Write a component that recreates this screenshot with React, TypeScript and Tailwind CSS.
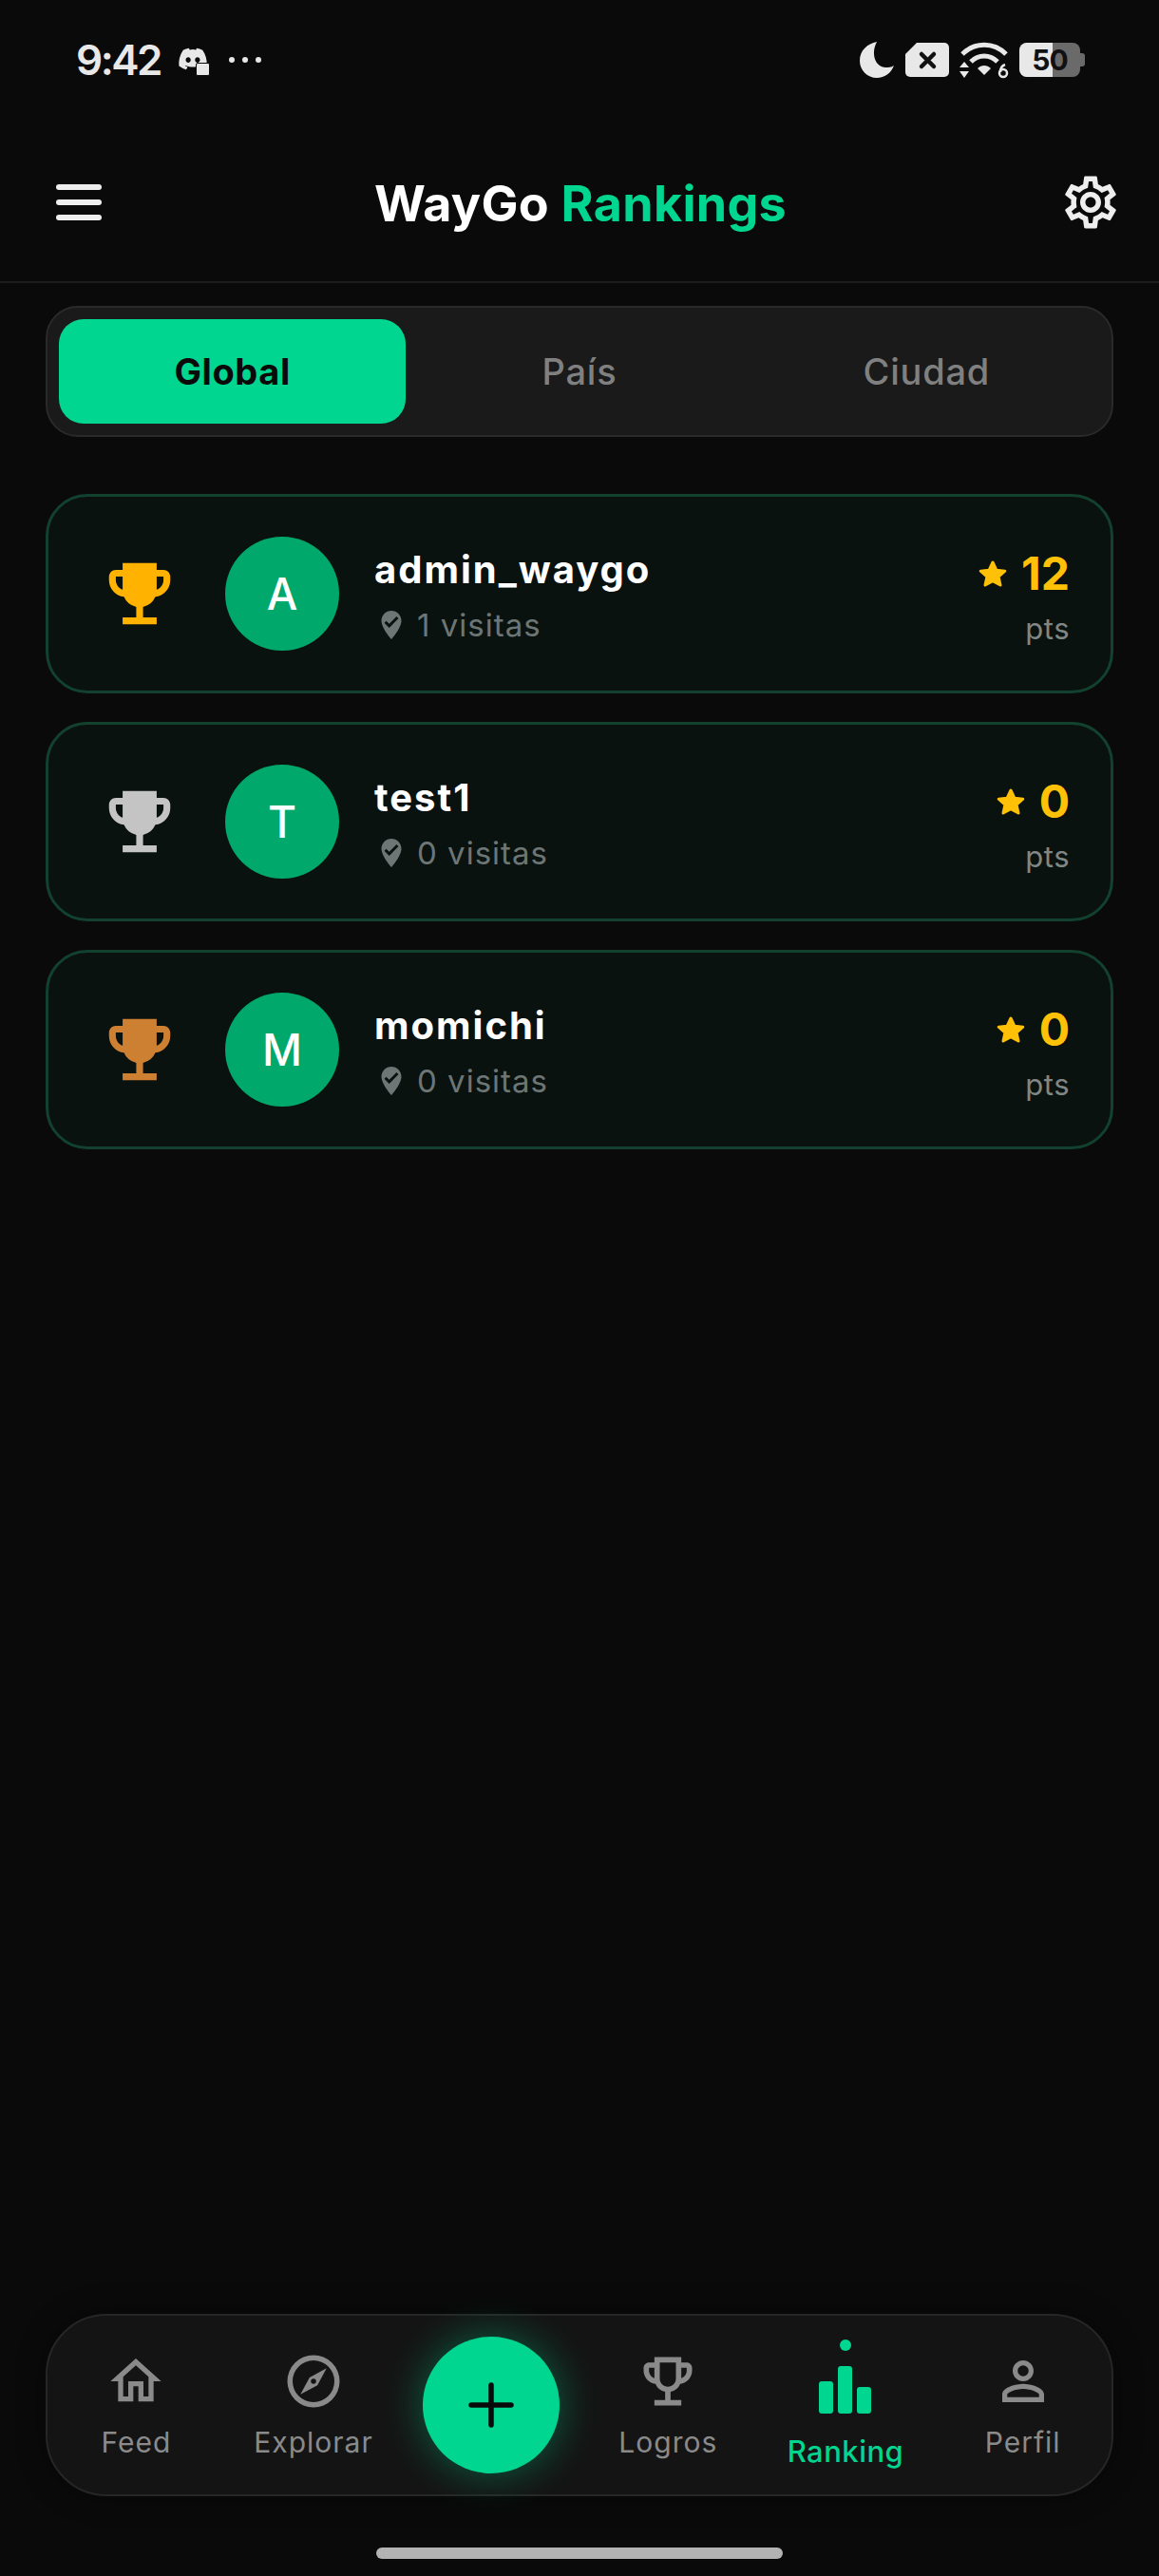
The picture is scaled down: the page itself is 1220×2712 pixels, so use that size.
import {
  MdEmojiEvents,
  MdOutlineEmojiEvents,
  MdPersonOutline,
  MdWhereToVote,
  MdOutlineSettings,
} from 'react-icons/md';
import { FaDiscord } from 'react-icons/fa';
import type { ReactNode } from 'react';

const font = { fontFamily: 'Inter, "Noto Sans", sans-serif' };

const players = [
  { name: 'admin_waygo', letter: 'A', visits: 1, pts: 12, medal: 'text-[#ffb300]' },
  { name: 'test1', letter: 'T', visits: 0, pts: 0, medal: 'text-[#c4c4c4]' },
  { name: 'momichi', letter: 'M', visits: 0, pts: 0, medal: 'text-[#cd7f32]' },
];

function HomeIcon() {
  return (
    <svg viewBox="0 0 24 24" className="w-[64px] h-[64px] fill-[#8a8a8a]">
      <path d="M12 5.69L17 10.19V18H15V12H9V18H7V10.19L12 5.69M12 3L2 12H5V20H11V14H13V20H19V12H22L12 3Z" />
    </svg>
  );
}

function CompassIcon() {
  return (
    <svg viewBox="0 0 24 24" className="w-[66px] h-[66px] fill-[#8a8a8a]">
      <path d="M7,17L10.5,10.5L17,7L13.5,13.5L7,17M12,11A1,1 0 0,0 11,12A1,1 0 0,0 12,13A1,1 0 0,0 13,12A1,1 0 0,0 12,11M12,2A10,10 0 0,1 22,12A10,10 0 0,1 12,22A10,10 0 0,1 2,12A10,10 0 0,1 12,2M12,4A8,8 0 0,0 4,12A8,8 0 0,0 12,20A8,8 0 0,0 20,12A8,8 0 0,0 12,4Z" />
    </svg>
  );
}

function BarsIcon() {
  return (
    <svg viewBox="0 0 55 50" className="w-[55px] h-[50px] fill-[#00d68f]">
      <rect x="0" y="16" width="15" height="34" rx="3" />
      <rect x="20" y="0" width="15" height="50" rx="3" />
      <rect x="40" y="22" width="15" height="28" rx="3" />
    </svg>
  );
}

function StarIcon() {
  return (
    <svg viewBox="0 0 32 30" className="w-[32px] h-[30px] fill-[#ffc107] stroke-[#ffc107]">
      <path
        d="M16 3l3.8 8.2 9 1-6.7 6 1.9 8.8L16 22.6 8 27l1.9-8.8-6.7-6 9-1z"
        strokeWidth="3"
        strokeLinejoin="round"
      />
    </svg>
  );
}

function StatusIcons() {
  return (
    <div className="mt-[2px] flex items-center gap-[11px]">
      {/* luna */}
      <svg viewBox="0 0 38 40" className="w-[38px] h-[40px] fill-[#e8e8e8]">
        <path d="M19 1C9 3 1 10 1 21c0 10 8 18 18 18 8 0 15-5 18-13-3 2-6 2-9 2C18 28 12 14 19 1z" />
      </svg>
      {/* sim sin señal */}
      <svg viewBox="0 0 46 36" className="w-[46px] h-[36px]">
        <path d="M12 0h29a5 5 0 0 1 5 5v26a5 5 0 0 1-5 5H5a5 5 0 0 1-5-5V12z" fill="#e8e8e8" />
        <path d="M17 12l13 13M30 12L17 25" stroke="#111" strokeWidth="4.5" strokeLinecap="round" />
      </svg>
      {/* wifi */}
      <svg viewBox="0 0 52 40" className="w-[52px] h-[40px] fill-none">
        <path d="M3 14C16 1 36 1 49 14" stroke="#e8e8e8" strokeWidth="5" />
        <path d="M12 22c8-8 20-8 28 0" stroke="#e8e8e8" strokeWidth="5" />
        <path d="M19 29c4-4 10-4 14 0l-7 7z" fill="#e8e8e8" />
        <path d="M5 22l-5 6h10zM5 39l-5-7h10z" fill="#e8e8e8" />
        <circle cx="46" cy="34" r="4" stroke="#e8e8e8" strokeWidth="2.5" />
        <path d="M43 33c0-4 2-7 5-8" stroke="#e8e8e8" strokeWidth="2.5" />
      </svg>
      {/* bateria */}
      <div className="flex items-center">
        <div className="relative w-[64px] h-[36px] rounded-[8px] bg-[#6a6a6a] flex items-center justify-center">
          <div className="absolute left-0 top-0 bottom-0 w-[35px] rounded-l-[8px] bg-[#e8e8e8]" />
          <span className="relative text-[30px] font-bold leading-[36px] text-[#111] tracking-[-1px]">50</span>
        </div>
        <div className="w-[5px] h-[14px] rounded-r-[3px] bg-[#6a6a6a]" />
      </div>
    </div>
  );
}

function NavItem({ label, icon, active }: { label: string; icon: ReactNode; active?: boolean }) {
  return (
    <div className="self-start pt-[36px] flex flex-col items-center">
      <div className="relative h-[66px] flex items-center justify-center">
        {active && <span className="absolute -top-[11px] w-[12px] h-[12px] rounded-full bg-[#00d68f]" />}
        <div className={active ? 'mt-[18px]' : ''}>{icon}</div>
      </div>
      <span
        className={
          active
            ? 'mt-[23px] text-[31px] leading-[36px] font-medium tracking-[0.5px] text-[#00d68f]'
            : 'mt-[13px] text-[30px] leading-[36px] text-[#8a8a8a] tracking-[1px]'
        }
      >
        {label}
      </span>
    </div>
  );
}

export default function App() {
  return (
    <div className="w-[1220px] h-[2712px] bg-[#0a0a0a] flex flex-col text-white" style={font}>
      {/* Barra de estado */}
      <div className="h-[130px] pl-[80px] pr-[78px] pt-[41px] flex items-start justify-between">
        <div className="flex items-center gap-[18px]">
          <span className="text-[44px] leading-[44px] font-semibold tracking-[-2.5px] text-[#e8e8e8]">9:42</span>
          <div className="relative w-[34px] h-[34px]">
            <FaDiscord className="w-[32px] h-[32px] text-[#e8e8e8]" />
            <span className="absolute right-0 bottom-0 w-[15px] h-[14px] rounded-[2px] bg-[#e8e8e8] border border-[#0a0a0a]" />
          </div>
          <div className="flex gap-[8px] ml-[2px]">
            <span className="w-[6px] h-[6px] rounded-full bg-[#e8e8e8]" />
            <span className="w-[6px] h-[6px] rounded-full bg-[#e8e8e8]" />
            <span className="w-[6px] h-[6px] rounded-full bg-[#e8e8e8]" />
          </div>
        </div>
        <StatusIcons />
      </div>

      {/* Cabecera */}
      <div className="h-[168px] pl-[59px] pr-[39px] flex items-center justify-between border-b-[2px] border-[#1c1c1c]">
        <div className="w-[48px] flex flex-col gap-[10px]">
          <span className="h-[6px] rounded-full bg-[#eeeeee]" />
          <span className="h-[6px] rounded-full bg-[#eeeeee]" />
          <span className="h-[6px] rounded-full bg-[#eeeeee]" />
        </div>
        <h1 className="mt-[4px] text-[52px] leading-[64px] font-bold tracking-[0.3px]">
          WayGo <span className="text-[#00d68f]">Rankings</span>
        </h1>
        <MdOutlineSettings className="w-[66px] h-[66px] text-[#eeeeee]" />
      </div>

      {/* Tabs */}
      <div className="mx-[48px] mt-[24px] h-[138px] p-[12px] rounded-[34px] bg-[#1a1a1a] border-[2px] border-[#2a2a2a] grid grid-cols-3 items-stretch">
        <div className="rounded-[26px] bg-[#00d68f] flex items-center justify-center text-[38px] font-bold tracking-[0.6px] text-[#0a0a0a]">Global</div>
        <div className="flex items-center justify-center text-[38px] font-medium tracking-[0.8px] text-[#808080]">País</div>
        <div className="flex items-center justify-center text-[38px] font-medium tracking-[0.8px] text-[#808080]">Ciudad</div>
      </div>

      {/* Lista */}
      <div className="mx-[48px] mt-[60px] flex flex-col gap-[30px]">
        {players.map((p) => (
          <div
            key={p.name}
            className="h-[210px] rounded-[44px] bg-[#0a1210] border-[3px] border-[#12412f] pl-[53px] pr-[43px] flex items-center"
          >
            <MdEmojiEvents className={`w-[86px] h-[86px] shrink-0 ${p.medal}`} />
            <div className="ml-[47px] w-[120px] h-[120px] rounded-full bg-[#00a86b] flex items-center justify-center text-[46px] font-medium shrink-0">
              {p.letter}
            </div>
            <div className="ml-[37px] mt-[5px] flex-1">
              <div className="-mt-[2px] text-[40px] leading-[50px] font-bold tracking-[2px]">{p.name}</div>
              <div className="mt-[12px] flex items-center gap-[9px] text-[33px] leading-[42px] tracking-[1px] text-[#6d7674]">
                <MdWhereToVote className="w-[36px] h-[36px] text-[#6d7674]" />
                {p.visits} visitas
              </div>
            </div>
            <div className="mt-[7px] flex flex-col items-end">
              <div className="flex items-center gap-[14px]">
                <StarIcon />
                <span className="text-[48px] leading-[56px] font-bold text-[#ffc107]">{p.pts}</span>
              </div>
              <span className="mt-[10px] text-[31px] leading-[40px] tracking-[0.5px] text-[#808886]">pts</span>
            </div>
          </div>
        ))}
      </div>

      <div className="flex-1" />

      {/* Navegación inferior */}
      <div className="mx-[48px] h-[192px] rounded-[64px] bg-[#141414] border-[2px] border-[#262626] shadow-[0_0_30px_rgba(0,0,0,0.4)] grid grid-cols-6 items-center">
        <NavItem label="Feed" icon={<HomeIcon />} />
        <NavItem label="Explorar" icon={<CompassIcon />} />
        <div className="flex justify-center">
          <div className="w-[144px] h-[144px] rounded-full bg-[#00d68f] shadow-[0_0_44px_rgba(0,214,143,0.4)] flex items-center justify-center">
            <svg viewBox="0 0 48 48" className="w-[48px] h-[48px]">
              <path d="M24 3v42M3 24h42" stroke="#0a0a0a" strokeWidth="5.5" strokeLinecap="round" />
            </svg>
          </div>
        </div>
        <NavItem label="Logros" icon={<MdOutlineEmojiEvents className="w-[68px] h-[68px] text-[#8a8a8a]" />} />
        <NavItem label="Ranking" icon={<BarsIcon />} active />
        <NavItem label="Perfil" icon={<MdPersonOutline className="w-[66px] h-[66px] text-[#8a8a8a]" />} />
      </div>

      {/* Indicador de inicio */}
      <div className="h-[84px] flex items-start justify-center pt-[54px]">
        <div className="w-[428px] h-[12px] rounded-full bg-[#b3b3b3]" />
      </div>
    </div>
  );
}
